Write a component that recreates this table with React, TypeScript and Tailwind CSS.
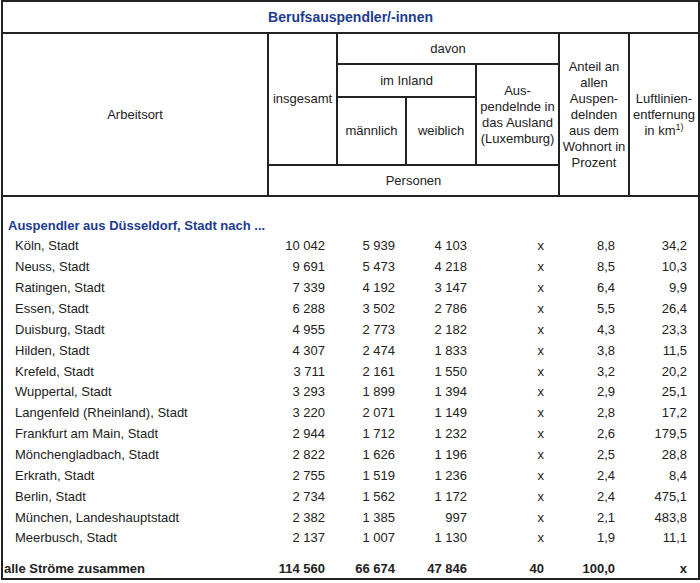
import React from 'react';

type Row = [string, string, string, string, string, string, string];

const rows: Row[] = [
    ['Köln, Stadt', '10 042', '5 939', '4 103', 'x', '8,8', '34,2'],
    ['Neuss, Stadt', '9 691', '5 473', '4 218', 'x', '8,5', '10,3'],
    ['Ratingen, Stadt', '7 339', '4 192', '3 147', 'x', '6,4', '9,9'],
    ['Essen, Stadt', '6 288', '3 502', '2 786', 'x', '5,5', '26,4'],
    ['Duisburg, Stadt', '4 955', '2 773', '2 182', 'x', '4,3', '23,3'],
    ['Hilden, Stadt', '4 307', '2 474', '1 833', 'x', '3,8', '11,5'],
    ['Krefeld, Stadt', '3 711', '2 161', '1 550', 'x', '3,2', '20,2'],
    ['Wuppertal, Stadt', '3 293', '1 899', '1 394', 'x', '2,9', '25,1'],
    ['Langenfeld (Rheinland), Stadt', '3 220', '2 071', '1 149', 'x', '2,8', '17,2'],
    ['Frankfurt am Main, Stadt', '2 944', '1 712', '1 232', 'x', '2,6', '179,5'],
    ['Mönchengladbach, Stadt', '2 822', '1 626', '1 196', 'x', '2,5', '28,8'],
    ['Erkrath, Stadt', '2 755', '1 519', '1 236', 'x', '2,4', '8,4'],
    ['Berlin, Stadt', '2 734', '1 562', '1 172', 'x', '2,4', '475,1'],
    ['München, Landeshauptstadt', '2 382', '1 385', '997', 'x', '2,1', '483,8'],
    ['Meerbusch, Stadt', '2 137', '1 007', '1 130', 'x', '1,9', '11,1'],
];

export default function App() {
    const th = 'border-2 border-[#222] font-normal text-center align-middle p-0';
    return (
        <div className="w-[700px] h-[583px] bg-white pl-[1px] text-[#222] text-[13px] leading-[16px]" style={{ fontFamily: '"Liberation Sans", Arial, sans-serif' }}>
            <table className="border-collapse table-fixed w-[697px] border-2 border-[#222]">
                <colgroup>
                    <col className="w-[266px]" />
                    <col className="w-[69px]" />
                    <col className="w-[69px]" />
                    <col className="w-[70px]" />
                    <col className="w-[83px]" />
                    <col className="w-[70px]" />
                    <col className="w-[70px]" />
                </colgroup>
                <thead>
                    <tr className="h-[32px]">
                        <th colSpan={7} className="border-2 border-[#222] text-center align-middle text-[14px] font-bold text-[#1d3b8f]">Berufsauspendler/-innen</th>
                    </tr>
                    <tr className="h-[31px]">
                        <th rowSpan={4} className={th}>Arbeitsort</th>
                        <th rowSpan={3} className={th}>insgesamt</th>
                        <th colSpan={3} className={th}>davon</th>
                        <th rowSpan={4} className={th}>
                            Anteil an<br />allen<br />Auspen-<br />delnden<br />aus dem<br />Wohnort in<br />Prozent
                        </th>
                        <th rowSpan={4} className={th}>
                            Luftlinien-<br />entfernung<br />in km<sup className="text-[9px]">1)</sup>
                        </th>
                    </tr>
                    <tr className="h-[33px]">
                        <th colSpan={2} className={th}>im Inland</th>
                        <th rowSpan={2} className={th}>
                            Aus-<br />pendelnde in<br />das Ausland<br />(Luxemburg)
                        </th>
                    </tr>
                    <tr className="h-[68px]">
                        <th className={th}>männlich</th>
                        <th className={th}>weiblich</th>
                    </tr>
                    <tr className="h-[31px]">
                        <th colSpan={4} className={th}>Personen</th>
                    </tr>
                </thead>
                <tbody>
                    {/* spacer above section title */}
                    <tr className="h-[19px]"><td colSpan={7} /></tr>
                    <tr className="h-[21px]">
                        <td colSpan={7} className="pl-[5px] font-bold text-[#1d3b8f] align-middle">Auspendler aus Düsseldorf, Stadt nach ...</td>
                    </tr>
                    {rows.map((r) => (
                        <tr key={r[0]} className="h-[20.86px]">
                            <td className="pl-[12px] align-middle whitespace-nowrap">{r[0]}</td>
                            <td className="text-right pr-[12px]">{r[1]}</td>
                            <td className="text-right pr-[11px]">{r[2]}</td>
                            <td className="text-right pr-[9px]">{r[3]}</td>
                            <td className="text-right pr-[15px]">{r[4]}</td>
                            <td className="text-right pr-[14px]">{r[5]}</td>
                            <td className="text-right pr-[11px]">{r[6]}</td>
                        </tr>
                    ))}
                    <tr className="h-[11px]"><td colSpan={7} /></tr>
                    <tr className="h-[19px] font-bold">
                        <td className="pl-[1px] whitespace-nowrap">alle Ströme zusammen</td>
                        <td className="text-right pr-[12px]">114 560</td>
                        <td className="text-right pr-[11px]">66 674</td>
                        <td className="text-right pr-[9px]">47 846</td>
                        <td className="text-right pr-[15px]">40</td>
                        <td className="text-right pr-[14px]">100,0</td>
                        <td className="text-right pr-[11px]">x</td>
                    </tr>
                </tbody>
            </table>
        </div>
    );
}
